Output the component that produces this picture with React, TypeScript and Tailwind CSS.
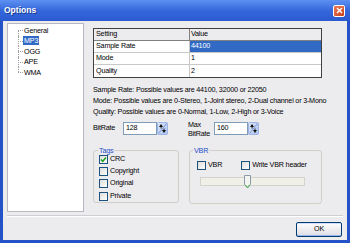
import React from "react";

function SpinBtn() {
  return (
    <svg width="11" height="13" viewBox="0 0 11 13" className="block shrink-0">
      <defs>
        <linearGradient id="sg" x1="0" y1="0" x2="1" y2="1">
          <stop offset="0" stopColor="#dfe8fb" />
          <stop offset="1" stopColor="#a9c0ef" />
        </linearGradient>
      </defs>
      <rect x="0.5" y="0.5" width="10" height="12" rx="1" fill="url(#sg)" stroke="#9db4e6" />
      <line x1="1.5" y1="11.5" x2="9.5" y2="1.5" stroke="#6b86c0" strokeWidth="0.8" />
      <path d="M2 5 L4 2 L6 5 Z" fill="#111" />
      <rect x="3.6" y="4.5" width="0.9" height="2" fill="#111" />
      <path d="M5 8 L7 11 L9 8 Z" fill="#111" />
      <rect x="6.6" y="6.5" width="0.9" height="2" fill="#111" />
    </svg>
  );
}

function Check({ checked }: { checked?: boolean }) {
  return (
    <div className="w-[9px] h-[9px] border border-[#1c5180] bg-gradient-to-br from-[#dcdcd7] to-white shrink-0 flex items-center justify-center">
      {checked && (
        <svg width="7" height="7" viewBox="0 0 7 7">
          <path d="M1 3.5 L2.8 5.3 L6 1.6" fill="none" stroke="#21a121" strokeWidth="1.5" />
        </svg>
      )}
    </div>
  );
}

function TreeItem({ label, first, last, selected }: { label: string; first?: boolean; last?: boolean; selected?: boolean }) {
  return (
    <div className="flex items-center h-[10.5px]">
      <div className="relative w-[15px] h-full shrink-0">
        <div
          className={`absolute left-[10px] w-0 border-l border-dotted border-[#a0a0a0] ${first ? "top-1/2" : "top-0"} ${last ? "h-1/2" : "bottom-0"}`}
        />
        <div className="absolute left-[10px] top-1/2 w-[5px] h-0 border-t border-dotted border-[#a0a0a0]" />
      </div>
      <span className={`px-[1px] leading-[9px] ${selected ? "bg-[#316ac5] text-white" : ""}`}>{label}</span>
    </div>
  );
}

export default function App() {
  return (
    <div className="w-[350px] h-[243px] flex flex-col bg-[#2453c8] font-['Liberation_Sans',Arial,sans-serif] text-[7.2px] tracking-[-0.2px] text-black overflow-hidden">
      {/* Title bar */}
      <div className="h-[21px] shrink-0 flex items-center pl-[4px] pr-[5px] bg-gradient-to-b from-[#5e91f0] via-[#3567dc] to-[#2a5ad0]">
        <span className="text-white font-bold text-[8.5px] tracking-[0px] [text-shadow:1px_1px_0_#1a3a90]">Options</span>
        <div className="ml-auto w-[12px] h-[12px] rounded-[2px] border border-white bg-gradient-to-br from-[#ea7a55] to-[#c9401a] flex items-center justify-center">
          <svg width="7" height="7" viewBox="0 0 7 7">
            <path d="M1 1 L6 6 M6 1 L1 6" stroke="white" strokeWidth="1.4" />
          </svg>
        </div>
      </div>

      {/* Body */}
      <div className="flex-1 mx-[3px] mb-[3px] bg-[#ecebee] flex flex-col">
        <div className="flex pl-[4px] pt-[2px]">
          {/* Tree */}
          <div className="w-[77px] h-[189px] bg-white border border-[#b8b8c0] pt-[1px] shrink-0">
            <TreeItem label="General" first />
            <TreeItem label="MP3" selected />
            <TreeItem label="OGG" />
            <TreeItem label="APE" />
            <TreeItem label="WMA" last />
          </div>

          {/* Right panel */}
          <div className="ml-[9px] pt-[5px] w-[229px] flex flex-col">
            {/* Table */}
            <div className="border border-[#404040] bg-white">
              <div className="flex h-[12px] bg-[#ecebee] border-b border-[#808080]">
                <div className="w-[96px] border-r border-[#808080] px-[2px] flex items-center">Setting</div>
                <div className="flex-1 px-[1px] flex items-center">Value</div>
              </div>
              <div className="flex h-[12px] border-b border-[#c8c8c8]">
                <div className="w-[96px] border-r border-[#c8c8c8] px-[2px] flex items-center">Sample Rate</div>
                <div className="flex-1 px-[1px] flex items-center bg-[#316ac5] text-white">44100</div>
              </div>
              <div className="flex h-[12px] border-b border-[#c8c8c8]">
                <div className="w-[96px] border-r border-[#c8c8c8] px-[2px] flex items-center">Mode</div>
                <div className="flex-1 px-[1px] flex items-center">1</div>
              </div>
              <div className="flex h-[12px]">
                <div className="w-[96px] border-r border-[#c8c8c8] px-[2px] flex items-center">Quality</div>
                <div className="flex-1 px-[1px] flex items-center">2</div>
              </div>
            </div>

            {/* Description */}
            <div className="mt-[6px] leading-[11px] whitespace-nowrap">
              <div>Sample Rate: Possible values are 44100, 32000 or 22050</div>
              <div>Mode: Possible values are 0-Stereo, 1-Joint stereo, 2-Dual channel or 3-Mono</div>
              <div>Quality: Possible values are 0-Normal, 1-Low, 2-High or 3-Voice</div>
            </div>

            {/* Bitrate row */}
            <div className="mt-[4px] flex items-center h-[15px]">
              <span className="w-[30px]">BitRate</span>
              <div className="flex items-center">
                <div className="w-[34px] h-[13px] bg-white border border-[#7f9db9] px-[2px] flex items-center">128</div>
                <SpinBtn />
              </div>
              <div className="ml-[20px] w-[26px] leading-[9px]">
                <div>Max</div>
                <div>BitRate</div>
              </div>
              <div className="flex items-center">
                <div className="w-[34px] h-[13px] bg-white border border-[#7f9db9] px-[2px] flex items-center">160</div>
                <SpinBtn />
              </div>
            </div>

            {/* Group boxes */}
            <div className="mt-[14px] flex gap-[10px]">
              <div className="relative w-[86px] h-[53px] border border-[#d0d0c8] rounded-[3px] pl-[5px] pt-[2px]">
                <span className="absolute left-[4px] top-[-5px] px-[1px] bg-[#ecebee] text-[#1f50c8] leading-[9px]">Tags</span>
                {[
                  ["CRC", true],
                  ["Copyright", false],
                  ["Original", false],
                  ["Private", false],
                ].map(([l, c]) => (
                  <div key={l as string} className="flex items-center h-[12.3px] gap-[2px]">
                    <Check checked={c as boolean} />
                    <span>{l as string}</span>
                  </div>
                ))}
              </div>
              <div className="relative w-[133px] h-[54px] border border-[#d0d0c8] rounded-[3px] pl-[7px] pt-[9px]">
                <span className="absolute left-[3px] top-[-5px] px-[1px] bg-[#ecebee] text-[#1f50c8] leading-[9px]">VBR</span>
                <div className="flex items-center h-[10px]">
                  <Check />
                  <span className="ml-[2px]">VBR</span>
                  <div className="ml-[19px]">
                    <Check />
                  </div>
                  <span className="ml-[2px]">Write VBR header</span>
                </div>
                <div className="relative mt-[7px] ml-[3px] w-[105px] h-[9px] border border-[#d4d4cc] bg-[#f0f0e8]">
                  <svg width="7" height="14" viewBox="0 0 7 14" className="absolute left-[43px] top-[-3px]">
                    <path d="M0.5 0.5 H6.5 V9.5 L3.5 13 L0.5 9.5 Z" fill="#f4f4f0" stroke="#8a9aa8" />
                    <path d="M1.2 9.8 L3.5 12.3 L5.8 9.8" fill="none" stroke="#30b030" strokeWidth="1" />
                  </svg>
                </div>
              </div>
            </div>
          </div>
        </div>

        {/* Separator */}
        <div className="mt-[3px] mx-[4px] h-[2px] border-t border-[#d0ced4] border-b border-b-white" />

        {/* OK */}
        <div className="flex justify-end pr-[5px] mt-[5px]">
          <div className="w-[46px] h-[15px] rounded-[2px] border border-[#003c74] bg-gradient-to-b from-white to-[#dcdce4] flex items-center justify-center shadow-[inset_0_-1px_0_#98b4e8,inset_0_1px_0_#cee0ff]">
            OK
          </div>
        </div>
      </div>
    </div>
  );
}
